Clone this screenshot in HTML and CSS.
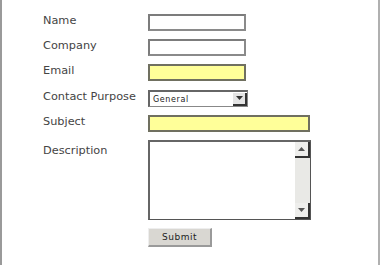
FILE: index.html
```html
<!DOCTYPE html>
<html>
<head>
<meta charset="utf-8">
<link rel="stylesheet" href="styles.css">
</head>
<body>
<div class="page">
  <form class="form">
    <label class="lbl">Name</label>
    <div class="field"><span class="input w98"></span></div>
    <label class="lbl">Company</label>
    <div class="field"><span class="input w98"></span></div>
    <label class="lbl">Email</label>
    <div class="field"><span class="input w98 req"></span></div>
    <label class="lbl">Contact Purpose</label>
    <div class="field">
      <span class="select">
        <span class="select-text">General</span>
        <span class="select-btn"><svg width="7" height="4" viewBox="0 0 7 4"><path d="M0 0h7L3.5 4z" fill="#333"/></svg></span>
      </span>
    </div>
    <label class="lbl">Subject</label>
    <div class="field"><span class="input w162 req"></span></div>
    <label class="lbl lbl-desc">Description</label>
    <div class="field">
      <span class="textarea">
        <span class="ta-body"></span>
        <span class="scroll">
          <span class="sbtn"><svg width="7" height="4" viewBox="0 0 7 4"><path d="M0 4h7L3.5 0z" fill="#555"/></svg></span>
          <span class="strack"></span>
          <span class="sbtn"><svg width="7" height="4" viewBox="0 0 7 4"><path d="M0 0h7L3.5 4z" fill="#555"/></svg></span>
        </span>
      </span>
    </div>
    <span></span>
    <div class="field"><span class="button">Submit</span></div>
  </form>
</div>
</body>
</html>
```
FILE: styles.css
```css
html, body {
  margin: 0;
  padding: 0;
  background: #fff;
}
.page {
  box-sizing: border-box;
  width: 380px;
  height: 265px;
  border-left: 2px solid #9a9a9a;
  border-right: 2px solid #b0b0b0;
  background: #fff;
  padding: 14px 0 0 41px;
  font-family: "DejaVu Sans", Verdana, sans-serif;
  color: #333;
}
.form {
  display: grid;
  grid-template-columns: 105px auto;
  grid-template-rows: 17px 17px 18px 17px 17px 80px 19px;
  row-gap: 8px;
  align-items: start;
}
.lbl {
  font-size: 11.3px;
  line-height: 12px;
  color: #444;
  padding-top: 1px;
  white-space: nowrap;
}
.lbl-desc { padding-top: 5px; }
.field {
  display: flex;
}
.input {
  display: block;
  box-sizing: border-box;
  height: 17px;
  border: 2px solid #7c7c7c;
  border-right-color: #8a8a8a;
  border-bottom-color: #8a8a8a;
  background: #fff;
}
.w98 { width: 98px; }
.w162 { width: 162px; }
.req { background: #ffff99; border-color: #707060; }
.select {
  box-sizing: border-box;
  width: 100px;
  height: 17px;
  display: flex;
  align-items: center;
  justify-content: space-between;
  border: 1px solid #888;
  border-top: 2px solid #666;
  border-left: 2px solid #666;
  background: #fff;
}
.select-text {
  font-size: 8px;
  letter-spacing: 0.6px;
  color: #222;
  padding-left: 3px;
}
.select-btn {
  box-sizing: border-box;
  width: 14px;
  height: 13px;
  background: #e4e4e4;
  border-right: 2px solid #333;
  border-bottom: 2px solid #333;
  display: flex;
  align-items: center;
  justify-content: center;
}
.textarea {
  box-sizing: border-box;
  width: 163px;
  height: 80px;
  display: flex;
  border-top: 2px solid #666;
  border-left: 2px solid #666;
  border-right: 1px solid #555;
  border-bottom: 1px solid #555;
  background: #fff;
}
.ta-body { flex: 1; }
.scroll {
  width: 15px;
  display: flex;
  flex-direction: column;
  background: #e9e9e6;
}
.sbtn {
  box-sizing: border-box;
  height: 16px;
  background: #eeeeec;
  border-right: 2px solid #333;
  border-bottom: 2px solid #333;
  display: flex;
  align-items: center;
  justify-content: center;
}
.strack { flex: 1; }
.button {
  box-sizing: border-box;
  width: 64px;
  height: 19px;
  display: flex;
  align-items: center;
  justify-content: center;
  background: #d9d7d2;
  border-top: 1px solid #eeeeee;
  border-left: 1px solid #eeeeee;
  border-right: 2px solid #9a9a9a;
  border-bottom: 2px solid #9a9a9a;
  font-size: 9px;
  letter-spacing: 0.5px;
  color: #222;
}
```
